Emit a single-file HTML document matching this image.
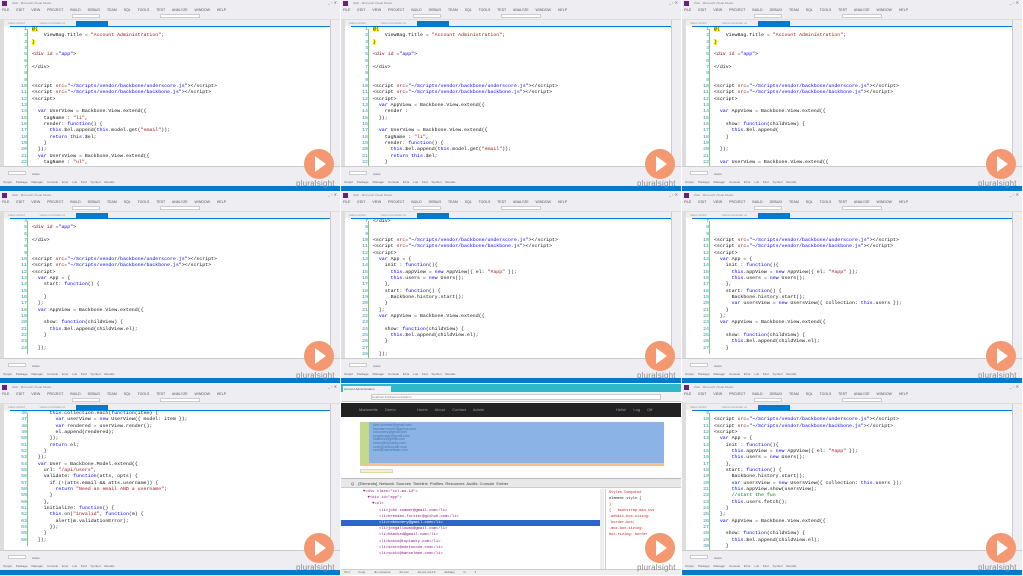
<!DOCTYPE html>
<html><head><meta charset="utf-8">
<style>
*{margin:0;padding:0;box-sizing:border-box}
body{width:1023px;height:576px;overflow:hidden;background:#fff;position:relative;font-family:"Liberation Sans",sans-serif}
.c{position:absolute;width:340px;height:191px;overflow:hidden;background:#fff}
.tb{position:absolute;left:0;top:0;width:100%;height:7px;background:#eeeef2}
.mn{position:absolute;left:0;top:7px;width:100%;height:6px;background:#eeeef2;font-size:3.5px;color:#555;padding-left:2px;word-spacing:6px;line-height:6px}
.tl{position:absolute;left:0;top:13px;width:100%;height:7px;background:#eeeef2;border-bottom:1px solid #ddd}
.tabs{position:absolute;left:0;top:20px;width:100%;height:6px;background:#eeeef2}
.tab{position:absolute;top:21px;height:5px;background:#007acc;left:76px;width:32px}
.tab2{position:absolute;top:21px;height:5px;left:8px;width:60px;font-size:3px;color:#999;word-spacing:14px}
.lg{position:absolute;left:0;top:20px;width:4px;height:146px;background:#ddd}
.rg{position:absolute;right:0;top:20px;width:10px;height:146px;background:#eeeef2;border-left:1px solid #ccc}
.ed{position:absolute;left:10px;top:26px;width:320px;height:140px;background:#fff;border-top:1px solid #007acc}
.code{position:absolute;left:11px;top:27px;font-family:"Liberation Mono",monospace;font-size:4.9px;line-height:6.33px;white-space:pre;color:#111}
.code .n{display:inline-block;width:16px;text-align:right;color:#2b91af;margin-right:5px}
.k{color:#00f}.s{color:#a31515}.t{color:#800000}.y{background:#ff0}
.gb{position:absolute;left:27px;top:29px;width:1px;background:#7c7;}
.bp{position:absolute;left:0;top:166px;width:100%;height:20px;background:#eeeef2;border-top:1px solid #ccc}
.bp div{position:absolute;font-size:3px;color:#666}
.sb{position:absolute;left:0;top:186px;width:100%;height:5px;background:#007acc}
.play{position:absolute;left:304px;top:149px;width:30px;height:30px;border-radius:50%;background:#f39870}
.play:after{content:"";position:absolute;left:11px;top:7px;border-left:11px solid #fff;border-top:8px solid transparent;border-bottom:8px solid transparent}
.ps{position:absolute;left:296px;top:179px;font-size:8px;color:#8a8a8a;letter-spacing:0.2px}
.vs{position:absolute;left:2px;top:1px;width:5px;height:5px;background:#68217a}
</style></head><body>
<div id="root"></div>
<script>
var cells=[
[1,[
'<span class="y">@{</span>','    ViewBag.Title = <span class="s">"Account Administration"</span>;','<span class="y">}</span>','','<span class="t">&lt;div</span> <span class="s">id</span> =<span class="k">"app"</span>&gt;','','&lt;/div&gt;','','',
'&lt;script <span class="s">src</span>=<span class="k">"~/Scripts/vendor/backbone/underscore.js"</span>&gt;&lt;/script&gt;','&lt;script <span class="s">src</span>=<span class="k">"~/Scripts/vendor/backbone/backbone.js"</span>&gt;&lt;/script&gt;','&lt;script&gt;','',
'  <span class="k">var</span> UserView = Backbone.View.extend({','    tagName : <span class="s">"li"</span>,','    render: <span class="k">function</span>() {','      <span class="k">this</span>.$el.append(<span class="k">this</span>.model.get(<span class="s">"email"</span>));','      <span class="k">return</span> <span class="k">this</span>.$el;','    }','  });','  <span class="k">var</span> UsersView = Backbone.View.extend({','    tagName : <span class="s">"ul"</span>,']],
[1,[
'<span class="y">@{</span>','    ViewBag.Title = <span class="s">"Account Administration"</span>;','<span class="y">}</span>','','<span class="t">&lt;div</span> <span class="s">id</span> =<span class="k">"app"</span>&gt;','','&lt;/div&gt;','','',
'&lt;script <span class="s">src</span>=<span class="k">"~/Scripts/vendor/backbone/underscore.js"</span>&gt;&lt;/script&gt;','&lt;script <span class="s">src</span>=<span class="k">"~/Scripts/vendor/backbone/backbone.js"</span>&gt;&lt;/script&gt;','&lt;script&gt;',
'  <span class="k">var</span> AppView = Backbone.View.extend({','    render : ','  });','',
'  <span class="k">var</span> UserView = Backbone.View.extend({','    tagName : <span class="s">"li"</span>,','    render: <span class="k">function</span>() {','      <span class="k">this</span>.$el.append(<span class="k">this</span>.model.get(<span class="s">"email"</span>));','      <span class="k">return</span> <span class="k">this</span>.$el;','    }']],
[1,[
'<span class="y">@{</span>','    ViewBag.Title = <span class="s">"Account Administration"</span>;','<span class="y">}</span>','','<span class="t">&lt;div</span> <span class="s">id</span> =<span class="k">"app"</span>&gt;','','&lt;/div&gt;','','',
'&lt;script <span class="s">src</span>=<span class="k">"~/Scripts/vendor/backbone/underscore.js"</span>&gt;&lt;/script&gt;','&lt;script <span class="s">src</span>=<span class="k">"~/Scripts/vendor/backbone/backbone.js"</span>&gt;&lt;/script&gt;','&lt;script&gt;','',
'  <span class="k">var</span> AppView = Backbone.View.extend({','','    show: <span class="k">function</span>(childView) {','      <span class="k">this</span>.$el.append(','    }','','  });','','  <span class="k">var</span> UserView = Backbone.View.extend({']],
[4,[
'','<span class="t">&lt;div</span> <span class="s">id</span> =<span class="k">"app"</span>&gt;','','&lt;/div&gt;','','',
'&lt;script <span class="s">src</span>=<span class="k">"~/Scripts/vendor/backbone/underscore.js"</span>&gt;&lt;/script&gt;','&lt;script <span class="s">src</span>=<span class="k">"~/Scripts/vendor/backbone/backbone.js"</span>&gt;&lt;/script&gt;','&lt;script&gt;',
'  <span class="k">var</span> App = {','    start: <span class="k">function</span>() {','','    }','  };','  <span class="k">var</span> AppView = Backbone.View.extend({','','    show: <span class="k">function</span>(childView) {','      <span class="k">this</span>.$el.append(childView.el);','    }','','  });']],
[7,[
'&lt;/div&gt;','','',
'&lt;script <span class="s">src</span>=<span class="k">"~/Scripts/vendor/backbone/underscore.js"</span>&gt;&lt;/script&gt;','&lt;script <span class="s">src</span>=<span class="k">"~/Scripts/vendor/backbone/backbone.js"</span>&gt;&lt;/script&gt;','&lt;script&gt;',
'  <span class="k">var</span> App = {','    init : <span class="k">function</span>(){','      <span class="k">this</span>.appView = <span class="k">new</span> AppView({ el: <span class="s">"#app"</span> });','      <span class="k">this</span>.users = <span class="k">new</span> Users();','    },','    start: <span class="k">function</span>() {','      Backbone.history.start();','    }','  };','  <span class="k">var</span> AppView = Backbone.View.extend({','','    show: <span class="k">function</span>(childView) {','      <span class="k">this</span>.$el.append(childView.el);','    }','','  });']],
[7,[
'','','',
'&lt;script <span class="s">src</span>=<span class="k">"~/Scripts/vendor/backbone/underscore.js"</span>&gt;&lt;/script&gt;','&lt;script <span class="s">src</span>=<span class="k">"~/Scripts/vendor/backbone/backbone.js"</span>&gt;&lt;/script&gt;','&lt;script&gt;',
'  <span class="k">var</span> App = {','    init : <span class="k">function</span>(){','      <span class="k">this</span>.appView = <span class="k">new</span> AppView({ el: <span class="s">"#app"</span> });','      <span class="k">this</span>.users = <span class="k">new</span> Users();','    },','    start: <span class="k">function</span>() {','      Backbone.history.start();','      <span class="k">var</span> usersView = <span class="k">new</span> UsersView({ collection: <span class="k">this</span>.users });','    }','  };','  <span class="k">var</span> AppView = Backbone.View.extend({','','    show: <span class="k">function</span>(childView) {','      <span class="k">this</span>.$el.append(childView.el);','    }']],
[46,[
'      <span class="k">this</span>.collection.each(<span class="k">function</span>(item) {','        <span class="k">var</span> userView = <span class="k">new</span> UserView({ model: item });','        <span class="k">var</span> rendered = userView.render();','        el.append(rendered);','      });','      <span class="k">return</span> el;','    }','  });','  <span class="k">var</span> User = Backbone.Model.extend({','    url: <span class="s">"/api/users"</span>,','    validate: <span class="k">function</span>(atts, opts) {','      <span class="k">if</span> (!(atts.email &amp;&amp; atts.username)) {','        <span class="k">return</span> <span class="s">"Need an email AND a username"</span>;','      }','    },','    initialize: <span class="k">function</span>() {','      <span class="k">this</span>.on(<span class="s">"invalid"</span>, <span class="k">function</span>(m) {','        alert(m.validationError);','      });','    }','  });']],
null,
[9,[
'','&lt;script <span class="s">src</span>=<span class="k">"~/Scripts/vendor/backbone/underscore.js"</span>&gt;&lt;/script&gt;','&lt;script <span class="s">src</span>=<span class="k">"~/Scripts/vendor/backbone/backbone.js"</span>&gt;&lt;/script&gt;','&lt;script&gt;',
'  <span class="k">var</span> App = {','    init : <span class="k">function</span>(){','      <span class="k">this</span>.appView = <span class="k">new</span> AppView({ el: <span class="s">"#app"</span> });','      <span class="k">this</span>.users = <span class="k">new</span> Users();','    },','    start: <span class="k">function</span>() {','      Backbone.history.start();','      <span class="k">var</span> usersView = <span class="k">new</span> UsersView({ collection: <span class="k">this</span>.users });','      <span class="k">this</span>.appView.show(usersView);','      <span style="color:#008000">//start the fun</span>','      <span class="k">this</span>.users.fetch();','    }','  };','  <span class="k">var</span> AppView = Backbone.View.extend({','','    show: <span class="k">function</span>(childView) {','      <span class="k">this</span>.$el.append(childView.el);','    }']]
];
var h='';
for(var i=0;i<9;i++){
 var x=(i%3)*341,y=Math.floor(i/3)*192;
 if(i==7){
  h+='<div class="c" style="left:'+x+'px;top:'+y+'px">'+
  '<div style="position:absolute;left:0;top:0;width:100%;height:8px;background:#2fb8c8"></div>'+
  '<div style="position:absolute;left:2px;top:2px;width:48px;height:6px;background:#f2f2f2;font-size:3px;color:#555;padding:1px">Account Administration</div>'+
  '<div style="position:absolute;left:0;top:8px;width:100%;height:10px;background:#f2f2f2;border-bottom:1px solid #ccc"><div style="position:absolute;left:30px;top:2px;width:290px;height:6px;background:#fff;border:1px solid #ccc;font-size:3px;color:#777">localhost:1122/account/admin</div></div>'+
  '<div style="position:absolute;left:0;top:19px;width:100%;height:14px;background:#222;font-size:4px;color:#999;line-height:14px;padding-left:18px;word-spacing:6px">Marionette Demo &nbsp; Home About Contact Admin <span style="position:absolute;left:275px">Hello! Log Off</span></div>'+
  '<div style="position:absolute;left:19px;top:38px;width:304px;height:44px;background:#8cb3e6;border-left:9px solid #c5d98a;border-bottom:3px solid #f4c38b;font-size:3.4px;line-height:3.6px;color:#47a;padding:2px 4px">john.sommer@gmail.com<br>brendan.forster@github.com<br>robconery@gmail.com<br>jongalloway@gmail.com<br>haacked@gmail.com<br>bosco@toptanky.com<br>scott@odetocode.com<br>scott@hanselman.com</div>'+
  '<div style="position:absolute;left:19px;top:85px;width:33px;height:4px;background:#eed;border:1px solid #dd9"></div>'+
  '<div style="position:absolute;left:0;top:94px;width:100%;height:10px;background:#e8e8e8;border-top:1px solid #bbb;border-bottom:1px solid #ccc;font-size:4px;line-height:10px;color:#444;padding-left:10px;word-spacing:1px">Q &nbsp;[Elements] Network Sources Timeline Profiles Resources Audits Console Ember</div>'+
  '<div style="position:absolute;left:0;top:105px;width:260px;height:80px;font-family:Liberation Mono,monospace;font-size:3.8px;line-height:6.2px;color:#881280;white-space:pre;padding-left:22px">▼&lt;div class="col-md-12"&gt;\n  ▼&lt;div id="app"&gt;\n    ▼&lt;ul&gt;\n       &lt;li&gt;john.sommer@gmail.com&lt;/li&gt;\n       &lt;li&gt;brendan.forster@github.com&lt;/li&gt;\n<span style="background:#3264c8;color:#fff;margin-left:-22px;padding-left:22px;display:inline-block;width:259px">       &lt;li&gt;robconery@gmail.com&lt;/li&gt;</span>\n       &lt;li&gt;jongalloway@gmail.com&lt;/li&gt;\n       &lt;li&gt;haacked@gmail.com&lt;/li&gt;\n       &lt;li&gt;bosco@toptanky.com&lt;/li&gt;\n       &lt;li&gt;scott@odetocode.com&lt;/li&gt;\n       &lt;li&gt;scott@hanselman.com&lt;/li&gt;</div>'+
  '<div style="position:absolute;left:259px;top:105px;width:4px;height:80px;background:#eee"></div>'+
  '<div style="position:absolute;left:264px;top:105px;width:76px;height:80px;border-left:1px solid #ccc;font-family:Liberation Mono,monospace;font-size:3.6px;line-height:6px;color:#c41a16;padding:1px 3px">Styles Computed<br><span style="color:#222">element.style {</span><br>}<br>{ &nbsp; bootstrap.min.css<br>-webkit-box-sizing:<br>&nbsp;border-box;<br>-moz-box-sizing:<br>box-sizing: border</div>'+
  '<div style="position:absolute;left:0;top:185px;width:100%;height:6px;background:#eee;border-top:1px solid #ccc;font-size:3px;color:#666;padding-left:3px;word-spacing:8px">html body div.container div.row div.col-md-12 div#app ul li</div>'+
  '<div class="play"></div><div class="ps">pluralsight</div></div>';
  continue;
 }
 var c=cells[i],st=c[0],L=c[1],s='';
 for(var j=0;j<L.length;j++)s+='<span class="n">'+(st+j)+'</span>'+L[j]+'\n';
 h+='<div class="c" style="left:'+x+'px;top:'+y+'px">'+
 '<div class="tb"><div class="vs"></div><span style="position:absolute;left:12px;top:1px;font-size:3px;color:#888">Web - Microsoft Visual Studio</span><span style="position:absolute;right:3px;top:0;font-size:4px;color:#666">_ ▫ ✕</span></div>'+
 '<div class="mn">FILE EDIT VIEW PROJECT BUILD DEBUG TEAM SQL TOOLS TEST ANALYZE WINDOW HELP</div>'+
 '<div class="tl"><span style="position:absolute;left:72px;top:1px;width:28px;height:4px;border:1px solid #ccc;background:#fff"></span><span style="position:absolute;left:160px;top:1px;width:40px;height:4px;border:1px solid #ccc;background:#fff"></span></div>'+
 '<div class="tabs"></div><div class="tab2">Index.cshtml Users.Controller.cs</div><div class="tab"></div>'+
 '<div class="lg"></div><div class="ed"></div><div class="rg"></div>'+
 '<div class="gb" style="height:'+(L.length*6.33)+'px"></div>'+
 '<div class="code">'+s+'</div>'+
 '<div class="bp"><div style="left:8px;top:4px;width:18px;height:4px;border:1px solid #ccc;background:#fff"></div><div style="left:32px;top:5px">Autos</div><div style="left:3px;top:13px;word-spacing:3px">Output Package Manager Console Error List Find Symbol Results</div></div>'+
 '<div class="sb"></div>'+
 '<div class="play"></div><div class="ps">pluralsight</div></div>';
}
document.getElementById('root').innerHTML=h;
</script>
</body></html>
